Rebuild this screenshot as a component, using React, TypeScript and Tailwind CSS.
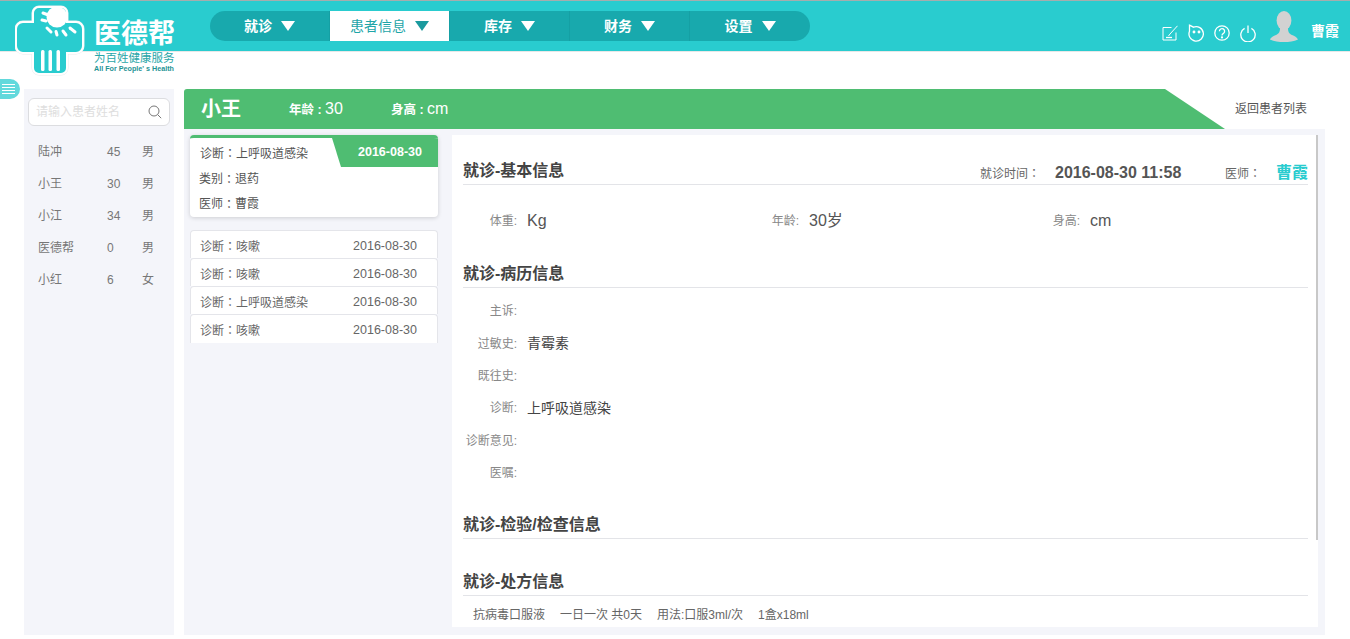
import React from "react";

const FONT = "[font-family:'Liberation_Sans','Noto_Sans_CJK_SC',sans-serif]";

function Colon() {
  return <span className="[font-family:'Noto_Sans_CJK_TC',sans-serif]">：</span>;
}

function Logo() {
  const d =
    "M39 7H61a6 6 0 0 1 6 6V22H76a7 7 0 0 1 7 7V46a7 7 0 0 1-7 7H67V68a6 6 0 0 1-6 6H39a6 6 0 0 1-6-6V53H23a7 7 0 0 1-7-7V29a7 7 0 0 1 7-7H33V13a6 6 0 0 1 6-6Z";
  return (
    <svg width="70" height="72" viewBox="15 5 70 72" className="block shrink-0">
      <path d={d} fill="#29cccf" stroke="#e9ebee" strokeWidth="3" />
      <path d={d} fill="#29cccf" stroke="#fff" strokeWidth="2" />
      <circle cx="57" cy="17" r="10.500" fill="#fff" />
      <g stroke="#fff" strokeWidth="3" strokeLinecap="round">
        <line x1="43" y1="13" x2="47" y2="14.500" />
        <line x1="42" y1="20" x2="46" y2="21" />
        <line x1="47" y1="28" x2="51" y2="32" />
        <line x1="56" y1="31.500" x2="57" y2="35" />
        <line x1="63" y1="31" x2="66" y2="35" />
        <line x1="70" y1="28" x2="75" y2="32" />
      </g>
      <g fill="#fff">
        <rect x="41" y="50" width="3.500" height="21" rx="1.500" />
        <rect x="48.500" y="50" width="3.500" height="21" rx="1.500" />
        <rect x="56.500" y="50" width="3.500" height="21" rx="1.500" />
      </g>
    </svg>
  );
}

function NavItem({ label, active, last }: { label: string; active?: boolean; last?: boolean }) {
  return (
    <div
      className={`flex w-[120px] items-center justify-center gap-[9px] text-[14px] ${
        active ? "bg-white text-[#1ea5a8]" : "font-bold text-white"
      } ${last ? "" : "border-r border-[#15a0a4]"}`}
    >
      <span>{label}</span>
      <svg width="14" height="10" viewBox="0 0 14 10">
        <path d="M0 0h14L7 10Z" fill={active ? "#1a9a9e" : "#fff"} />
      </svg>
    </div>
  );
}

function TopIcons() {
  return (
    <div className="flex items-center gap-[10px] pt-[14px]">
      <svg width="16" height="16" viewBox="0 0 16 16" fill="none" stroke="#fff" strokeWidth="1">
        <path d="M9.500 2.500H1v12.500h13V7.500" />
        <path d="M15.500.8 8 9 6.500 11" />
        <path d="M4 12.500h6" strokeWidth="1.300" />
      </svg>
      <svg width="16" height="18" viewBox="0 0 16 18" fill="none" stroke="#fff" strokeWidth="1.300">
        <path d="M1.500 1.200 5.500 3.200a7.200 7.200 0 1 1-4 4Z" />
        <circle cx="6" cy="8" r="0.800" fill="#fff" />
        <circle cx="11" cy="8" r="0.800" fill="#fff" />
      </svg>
      <svg width="16" height="16" viewBox="0 0 16 16" fill="none" stroke="#fff" strokeWidth="1.300">
        <circle cx="8" cy="8" r="7.200" />
        <path d="M5.400 6.200A2.600 2.600 0 1 1 9.400 8.400C8.400 9 8 9.400 8 10.600" />
        <circle cx="8" cy="12.400" r="0.500" fill="#fff" />
      </svg>
      <svg width="16" height="17" viewBox="0 0 16 17" fill="none" stroke="#fff" strokeWidth="1.300">
        <path d="M4.600 3.400a7.200 7.200 0 1 0 6.800 0" />
        <path d="M8 .5v7.500" />
      </svg>
    </div>
  );
}

function Avatar() {
  return (
    <svg width="28" height="31" viewBox="0 0 28 31">
      <ellipse cx="14" cy="9.500" rx="7.400" ry="9.500" fill="#d2d2d2" />
      <path d="M10 17c0 4-1 5.500-4 7-2.500 1.200-5 2-6 4.500C4 30.500 9 31 14 31s10-.5 14-2.500c-1-2.500-3.500-3.300-6-4.500-3-1.500-4-3-4-7Z" fill="#d2d2d2" />
    </svg>
  );
}

const patients = [
  ["陆冲", "45", "男"],
  ["小王", "30", "男"],
  ["小江", "34", "男"],
  ["医德帮", "0", "男"],
  ["小红", "6", "女"],
];

function Sidebar() {
  return (
    <aside className="mt-[38px] flex h-[546px] w-[150px] flex-col bg-[#f4f5fa] px-[4px] pt-[9px]">
      <div className="flex h-[28px] items-center justify-between rounded-[6px] border border-[#dcdde0] bg-white pl-[7px] pr-[7px]">
        <span className="text-[12px] text-[#dedede]">请输入患者姓名</span>
        <svg width="14" height="14" viewBox="0 0 14 14" fill="none" stroke="#777" strokeWidth="1">
          <circle cx="6" cy="6" r="5" />
          <path d="m9.700 9.700 3.500 3.500" />
        </svg>
      </div>
      <div className="mt-[10px] flex flex-col">
        {patients.map(([n, a, g]) => (
          <div key={n} className="flex h-[32px] items-center pl-[10px] text-[12px] text-[#777]">
            <span className="w-[69px]">{n}</span>
            <span className="w-[35px]">{a}</span>
            <span>{g}</span>
          </div>
        ))}
      </div>
    </aside>
  );
}

const visits = [["咳嗽"], ["咳嗽"], ["上呼吸道感染"], ["咳嗽"]];

function VisitList() {
  return (
    <div className="flex w-[248px] flex-col">
      <div className="h-[82px] overflow-hidden rounded-[4px] border-t-[3px] border-[#4fbd72] bg-white text-[12px] text-[#555] shadow-[0_1px_4px_rgba(0,0,0,0.16)]">
        <div className="flex h-[29px] items-start justify-between">
          <span className="pl-[10px] pt-[6px]">诊断<Colon />上呼吸道感染</span>
          <span className="flex h-[29px] w-[106px] items-center justify-center bg-[#4fbd72] pl-[10px] text-[12.500px] font-bold text-white [clip-path:polygon(0_0,100%_0,100%_100%,9px_100%)]">
            2016-08-30
          </span>
        </div>
        <div className="-mt-px flex h-[25px] items-center pl-[9px]">类别<Colon />退药</div>
        <div className="flex h-[25px] items-center pl-[9px]">医师<Colon />曹霞</div>
      </div>
      <div className="mt-[13px] flex flex-col">
        {visits.map(([d], i) => (
          <div
            key={i}
            className={`flex items-center justify-between rounded-t-[4px] border-x border-t border-[#e4e5ea] bg-white pl-[9px] pr-[20px] pt-[3px] text-[12px] text-[#666] ${
              i === 3 ? "h-[29px]" : "h-[28px]"
            }`}
          >
            <span>诊断<Colon />{d}</span>
            <span className="text-[12.500px]">2016-08-30</span>
          </div>
        ))}
      </div>
    </div>
  );
}

function SectionHead({ title, children, className }: { title: string; children?: React.ReactNode; className?: string }) {
  return (
    <div className={`flex h-[27px] items-center justify-between border-b border-[#e3e4e8] ${className ?? ""}`}>
      <span className="text-[16px] font-bold text-[#444]">{title}</span>
      {children}
    </div>
  );
}

function Field({ label, value }: { label: string; value?: string }) {
  return (
    <div className="flex h-[32.400px] items-center">
      <span className="w-[56px] whitespace-nowrap pr-[2px] text-right text-[12px] text-[#888]">{label}:</span>
      <span className="ml-[8px] text-[14px] text-[#444]">{value}</span>
    </div>
  );
}

function Info({ label, value, width }: { label: string; value: string; width: string }) {
  return (
    <div className={`flex items-center ${width}`}>
      <span className="w-[36px] whitespace-nowrap pr-[2px] text-right text-[12px] text-[#888]">{label}:</span>
      <span className="ml-[8px] text-[16px] text-[#555]">{value}</span>
    </div>
  );
}

function Detail() {
  return (
    <div className="relative h-[492px] flex-1 overflow-hidden bg-white pl-[11px] pr-[10px] pt-[23px]">
      <div className="absolute right-0 top-0 h-[405px] w-[2px] bg-[#c8c8c8]" />
      <SectionHead title="就诊-基本信息">
        <div className="mt-[4px] flex items-center text-[12px] text-[#666]">
          <span className="w-[75px]">就诊时间<Colon /></span>
          <span className="w-[170px] text-[16px] font-bold text-[#555]">2016-08-30 11:58</span>
          <span className="w-[51px]">医师<Colon /></span>
          <span className="text-[16px] font-bold text-[#29cccf]">曹霞</span>
        </div>
      </SectionHead>
      <div className="flex h-[61px] items-center pl-[20px] pt-[10px]">
        <Info label="体重" value="Kg" width="w-[282px]" />
        <Info label="年龄" value="30岁" width="w-[281px]" />
        <Info label="身高" value="cm" width="w-[200px]" />
      </div>
      <SectionHead title="就诊-病历信息" className="mt-[15px]" />
      <div className="mt-[7px] flex flex-col">
        <Field label="主诉" />
        <Field label="过敏史" value="青霉素" />
        <Field label="既往史" />
        <Field label="诊断" value="上呼吸道感染" />
        <Field label="诊断意见" />
        <Field label="医嘱" />
      </div>
      <SectionHead title="就诊-检验/检查信息" className="mt-[22.600px]" />
      <SectionHead title="就诊-处方信息" className="mt-[30px]" />
      <div className="mt-[10px] flex gap-[15px] pl-[10px] text-[12px] text-[#666]">
        <span>抗病毒口服液</span>
        <span>一日一次 共0天</span>
        <span>用法:口服3ml/次</span>
        <span>1盒x18ml</span>
      </div>
    </div>
  );
}

export default function App() {
  return (
    <div className={`flex h-[639px] w-[1350px] flex-col overflow-hidden bg-white ${FONT}`}>
      <header className="flex h-[51px] shrink-0 border-t border-t-[#a6adad] bg-[#29cccf] shadow-[0_1px_0_#e8e8e8]">
        <div className="relative z-10 ml-[15px] flex h-[76px] w-[195px] items-start pt-[4px]">
          <Logo />
          <div className="ml-[9px] flex flex-col items-start whitespace-nowrap">
            <span className="mt-[14px] text-[27px] font-bold leading-[31px] text-white">医德帮</span>
            <span className="mt-[2px] text-[11.500px] leading-[13px] text-[#2aa6a8]">为百姓健康服务</span>
            <span className="-mt-px text-[7.200px] font-bold leading-[9px] text-[#1f9394]">All For People' s Health</span>
          </div>
        </div>
        <nav className="mt-[10px] flex h-[30px] w-[600px] overflow-hidden rounded-full bg-[#18a9ad]">
          <NavItem label="就诊" />
          <NavItem label="患者信息" active />
          <NavItem label="库存" />
          <NavItem label="财务" />
          <NavItem label="设置" last />
        </nav>
        <div className="ml-auto flex pr-[11px]">
          <TopIcons />
          <div className="ml-[14px] pt-[10px]">
            <Avatar />
          </div>
          <span className="ml-[13px] pt-[20px] text-[14px] font-bold text-white">曹霞</span>
        </div>
      </header>

      <div className="flex flex-1 items-start">
        <div className="w-[24px] shrink-0 pt-[28px]">
          <div className="flex h-[20px] w-[20px] flex-col items-center justify-center gap-[2px] rounded-r-full bg-[#62d9dc] pr-[3px]">
            <span className="h-px w-[13px] bg-white" />
            <span className="h-px w-[13px] bg-white" />
            <span className="h-px w-[13px] bg-white" />
            <span className="h-px w-[13px] bg-white" />
          </div>
        </div>
        <Sidebar />
        <main className="ml-[10px] mt-[38px] flex w-[1141px] flex-col">
          <div className="flex h-[40px] shrink-0">
            <div className="flex w-[1041px] items-center rounded-tl-[3px] bg-[#4fbd72] pl-[17px] text-white [clip-path:polygon(0_0,981px_0,100%_100%,0_100%)]">
              <span className="w-[88px] text-[20px] font-bold">小王</span>
              <span className="w-[102px] text-[16px]"><b className="text-[12.500px]">年龄 : </b>30</span>
              <span className="text-[16px]"><b className="text-[12.500px]">身高 : </b>cm</span>
            </div>
            <div className="flex flex-1 items-center justify-end pr-[18px] text-[12px] text-[#555]">返回患者列表</div>
          </div>
          <div className="flex h-[506px] gap-[14px] bg-[#f4f5fa] pl-[6px] pr-[7px] pt-[6px]">
            <VisitList />
            <Detail />
          </div>
        </main>
      </div>
    </div>
  );
}
